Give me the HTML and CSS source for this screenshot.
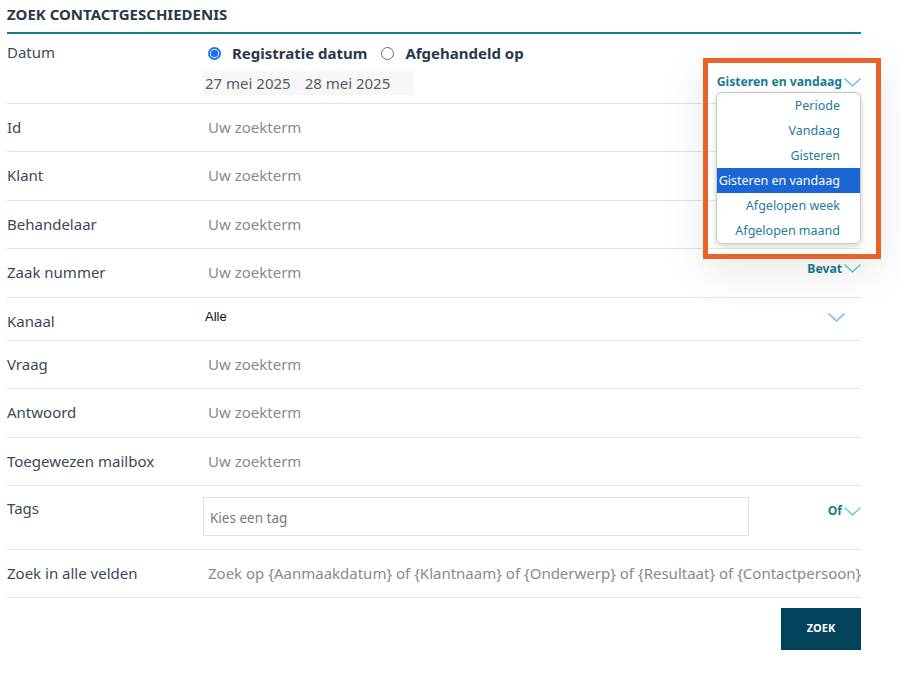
FILE: index.html
```html
<!DOCTYPE html>
<html lang="nl">
<head>
<meta charset="utf-8">
<title>Zoek contactgeschiedenis</title>
<link rel="stylesheet" href="styles.css">
</head>
<body>
<div class="page">
  <h1 class="title">ZOEK CONTACTGESCHIEDENIS</h1>

  <div class="row row-datum">
    <div class="label">Datum</div>
    <div class="value">
      <div class="radios">
        <span class="radio radio-on"></span><span class="radio-label">Registratie datum</span>
        <span class="radio"></span><span class="radio-label">Afgehandeld op</span>
      </div>
      <div class="dates"><span>27 mei 2025</span><span>28 mei 2025</span></div>
    </div>
    <div class="side side-datum">
      <span class="op">Gisteren en vandaag</span>
      <svg class="chev" width="17" height="9" viewBox="0 0 17 9"><polyline points="0.5,0.5 8.5,8 16.5,0.5" fill="none" stroke="#45bde0" stroke-width="1.1"/></svg>
      <ul class="menu">
        <li>Periode</li>
        <li>Vandaag</li>
        <li>Gisteren</li>
        <li class="sel">Gisteren en vandaag</li>
        <li>Afgelopen week</li>
        <li>Afgelopen maand</li>
      </ul>
    </div>
    <div class="highlight"></div>
  </div>

  <div class="row"><div class="label">Id</div><div class="value"><span class="ph">Uw zoekterm</span></div><div class="side"></div></div>
  <div class="row row-b"><div class="label">Klant</div><div class="value"><span class="ph">Uw zoekterm</span></div><div class="side"></div></div>
  <div class="row"><div class="label">Behandelaar</div><div class="value"><span class="ph">Uw zoekterm</span></div><div class="side"></div></div>
  <div class="row row-b"><div class="label">Zaak nummer</div><div class="value"><span class="ph">Uw zoekterm</span></div>
    <div class="side side-bevat"><span class="op">Bevat</span><svg class="chev" width="17" height="9" viewBox="0 0 17 9"><polyline points="0.5,0.5 8.5,8 16.5,0.5" fill="none" stroke="#45bde0" stroke-width="1.1"/></svg></div>
  </div>
  <div class="row row-kanaal"><div class="label">Kanaal</div><div class="value"><span class="select-val">Alle</span></div>
    <div class="side side-kanaal"><svg class="chev" width="17" height="9" viewBox="0 0 17 9"><polyline points="0.5,0.5 8.5,8 16.5,0.5" fill="none" stroke="#45bde0" stroke-width="1.1"/></svg></div>
  </div>
  <div class="row"><div class="label">Vraag</div><div class="value"><span class="ph">Uw zoekterm</span></div><div class="side"></div></div>
  <div class="row row-b"><div class="label">Antwoord</div><div class="value"><span class="ph">Uw zoekterm</span></div><div class="side"></div></div>
  <div class="row"><div class="label">Toegewezen mailbox</div><div class="value"><span class="ph">Uw zoekterm</span></div><div class="side"></div></div>
  <div class="row row-tags"><div class="label">Tags</div><div class="value"><div class="tagbox">Kies een tag</div></div>
    <div class="side side-tags"><span class="op">Of</span><svg class="chev" width="17" height="9" viewBox="0 0 17 9"><polyline points="0.5,0.5 8.5,8 16.5,0.5" fill="none" stroke="#45bde0" stroke-width="1.1"/></svg></div>
  </div>
  <div class="row"><div class="label">Zoek in alle velden</div><div class="value"><span class="ph">Zoek op {Aanmaakdatum} of {Klantnaam} of {Onderwerp} of {Resultaat} of {Contactpersoon}</span></div><div class="side"></div></div>

  <div class="actions"><button class="btn">ZOEK</button></div>
</div>
</body>
</html>
```

FILE: styles.css
```css
* { box-sizing: border-box; }
body {
  margin: 0;
  background: #fff;
  font-family: "Noto Sans", "Open Sans", sans-serif;
  color: #3c4859;
}
.page {
  margin-left: 7px;
  width: 854px;
  position: relative;
}
.title {
  margin: 0;
  padding: 4px 0 8px;
  font-size: 15px;
  line-height: 20px;
  font-weight: 700;
  color: #2b384b;
  border-bottom: 2px solid #177d8e;
}
.row {
  display: grid;
  grid-template-columns: 196px 1fr auto;
  align-items: center;
  height: 48px;
  border-bottom: 1px solid #e4e4e4;
}
.row-b { height: 49px; }
.label {
  font-size: 15px;
  line-height: 22px;
  color: #3c4859;
  margin-bottom: 2px;
}
.value { min-width: 0; }
.ph {
  display: block;
  padding-left: 5px;
  font-size: 15px;
  line-height: 22px;
  color: #8a8a8a;
  white-space: nowrap;
  margin-bottom: 2px;
}
.side {
  display: flex;
  align-items: center;
  gap: 2px;
}
.op {
  font-size: 12.2px;
  font-weight: 700;
  color: #187a8e;
  line-height: 18px;
}
.chev { display: block; }
.side-bevat { margin-bottom: 9px; }

/* Datum */
.row-datum {
  height: 70px;
  align-items: start;
  position: relative;
}
.row-datum .label { padding-top: 7px; }
.radios {
  display: flex;
  align-items: center;
  margin-top: 8px;
  height: 22px;
  padding-left: 5px;
}
.radio {
  width: 13px;
  height: 13px;
  border-radius: 50%;
  border: 1px solid #6b6b6b;
  margin-right: 11px;
  flex: none;
}
.radio-on {
  border: 2px solid #1a73e8;
  background: radial-gradient(circle, #1a73e8 0 3.5px, #fff 4px);
}
.radio-label {
  font-size: 15px;
  font-weight: 700;
  color: #2b384b;
  margin-right: 14px;
  line-height: 22px;
}
.dates {
  margin-top: 7px;
  width: 211px;
  height: 24px;
  background: #f7f7f7;
  display: flex;
  gap: 14px;
  padding-left: 2px;
  font-size: 15px;
  line-height: 24px;
  color: #555c66;
}
.side-datum {
  position: relative;
  margin-top: 39px;
}
.menu {
  position: absolute;
  right: 0;
  top: 19px;
  width: 145px;
  margin: 0;
  padding: 0;
  list-style: none;
  background: #fff;
  border: 1px solid #c9c9c9;
  border-radius: 6px;
  box-shadow: 0 2px 6px rgba(0,0,0,0.18);
  overflow: hidden;
  z-index: 3;
}
.menu li {
  height: 25px;
  line-height: 25px;
  text-align: right;
  padding-right: 20px;
  font-size: 12.5px;
  color: #1f7d98;
  white-space: nowrap;
}
.menu li.sel {
  background: #1a66d5;
  color: #fff;
}
.highlight {
  position: absolute;
  left: 696px;
  top: 24px;
  width: 178px;
  height: 201px;
  border: 5px solid #e8622a;
  box-shadow: 0 10px 40px rgba(0,0,0,0.10);
  z-index: 2;
  pointer-events: none;
}

/* Kanaal */
.row-kanaal {
  height: 43px;
  align-items: start;
}
.row-kanaal .label { padding-top: 12px; }
.select-val {
  display: block;
  padding-left: 2px;
  margin-top: 11px;
  font-family: "Liberation Sans", Arial, sans-serif;
  font-size: 13px;
  line-height: 15px;
  color: #111;
}
.side-kanaal { margin-top: 15px; padding-right: 16px; }

/* Tags */
.row-tags {
  height: 64px;
  align-items: start;
}
.row-tags .label { padding-top: 11px; }
.tagbox {
  margin-top: 11px;
  width: 546px;
  height: 39px;
  border: 1px solid #e0e0e0;
  padding-left: 6px;
  font-size: 13.5px;
  line-height: 40px;
  color: #7a7a7a;
}
.side-tags { margin-top: 16px; }

.actions {
  display: flex;
  justify-content: flex-end;
  margin-top: 10px;
}
.btn {
  width: 80px;
  height: 42px;
  border: 0;
  background: #02425a;
  color: #fff;
  font-family: "Noto Sans", "Open Sans", sans-serif;
  font-size: 11px;
  font-weight: 700;
  padding-bottom: 4px;
}
```
